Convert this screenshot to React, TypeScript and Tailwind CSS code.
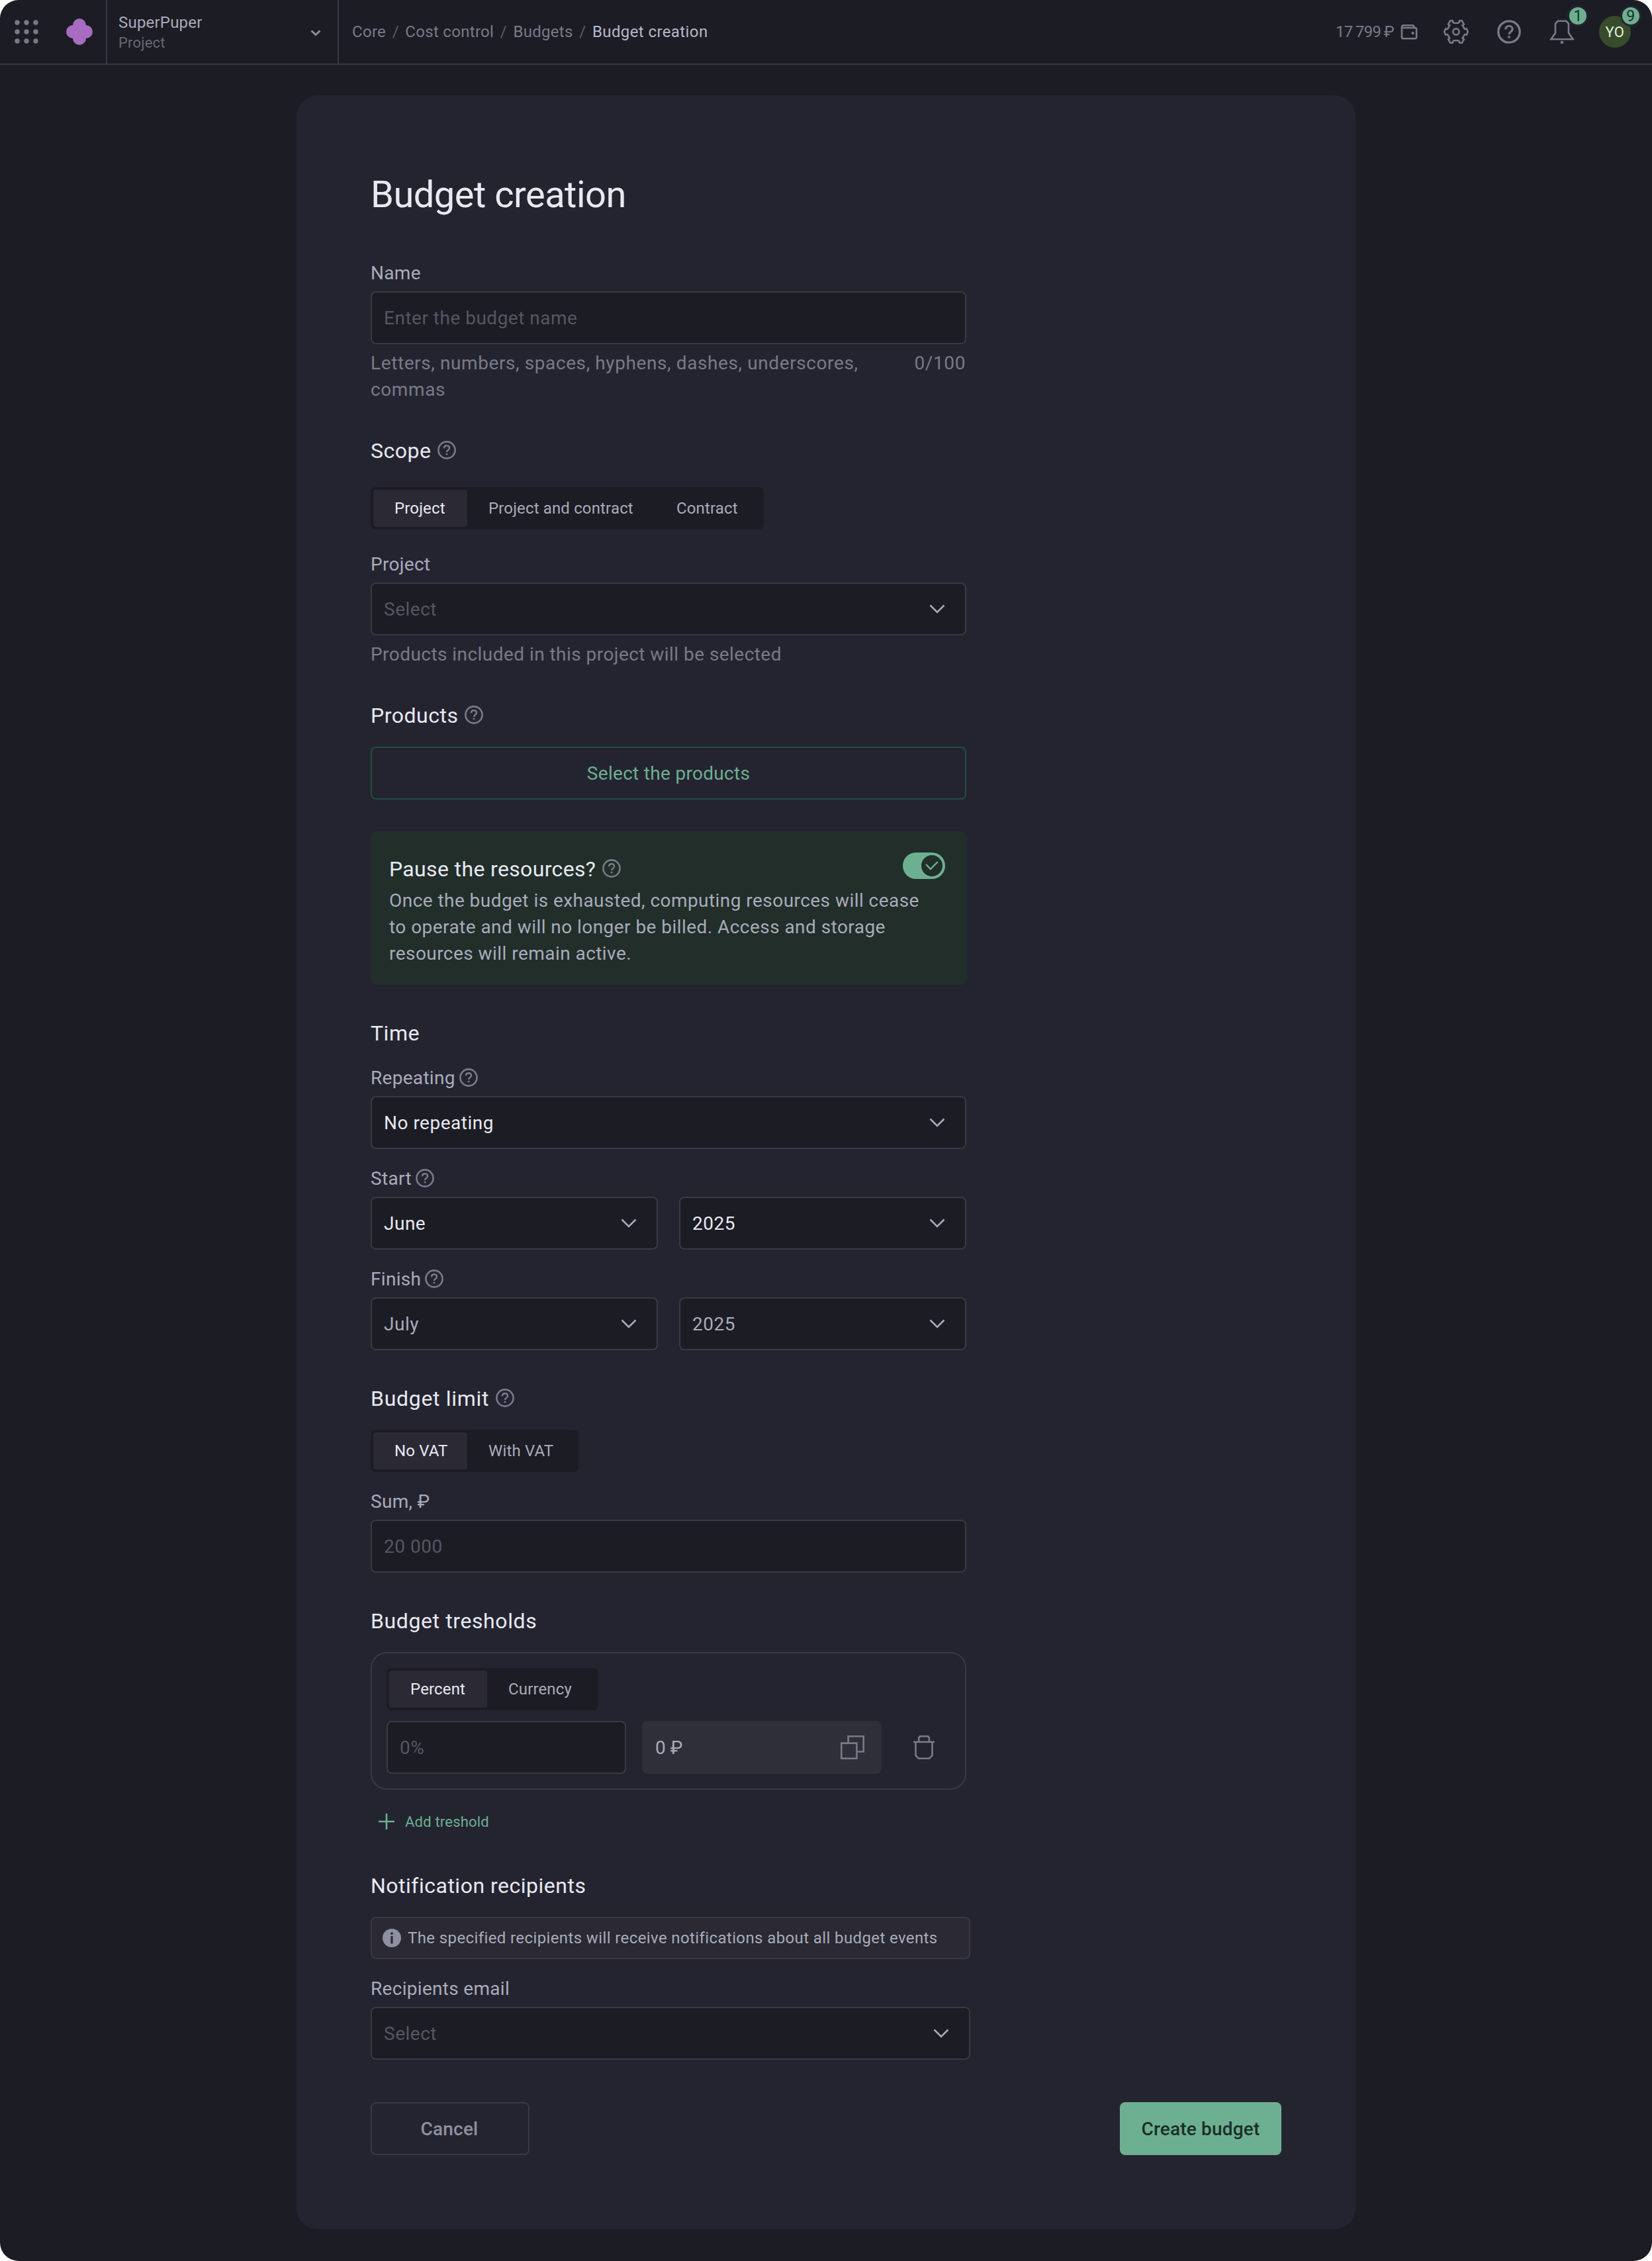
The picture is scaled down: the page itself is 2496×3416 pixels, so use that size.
import { useState } from 'react';
import type { ReactNode } from 'react';
import clsx from 'clsx';

function HelpIcon({ className = 'size-7' }: { className?: string }) {
  return (
    <svg viewBox="0 0 28 28" fill="none" stroke="#787a89" className={clsx('shrink-0', className)}>
      <circle cx="14" cy="14" r="12.6" strokeWidth="2.6" />
      <path d="M10 11.2c0-2.5 1.7-4 4-4s4 1.5 4 3.7c0 3.1-4 3.1-4 6.2" strokeWidth="2.5" />
      <rect x="12.7" y="18.8" width="2.6" height="2.6" fill="#787a89" stroke="none" />
    </svg>
  );
}

function ChevronIcon() {
  return (
    <svg viewBox="0 0 24 14" fill="none" stroke="#a9abba" strokeWidth="2.6" className="w-6 h-3.5 shrink-0">
      <path d="M1.5 1.5 12 12 22.5 1.5" />
    </svg>
  );
}

function Heading({ children, help }: { children: ReactNode; help?: boolean }) {
  return (
    <div className="flex h-12 items-center gap-2.5">
      <h2 className="mt-0.5 text-[32px] leading-[48px] tracking-[0.5px] text-[#e8e9f1]">{children}</h2>
      {help && <HelpIcon />}
    </div>
  );
}

function Label({ children, help }: { children: ReactNode; help?: boolean }) {
  return (
    <div className="flex h-10 items-center gap-1.5 mb-2">
      <span className="mt-0.5 text-[28px] leading-10 tracking-[0.3px] text-[#a9abba]">{children}</span>
      {help && <HelpIcon />}
    </div>
  );
}

type Tone = 'empty' | 'value' | 'auto';

const tones: Record<Tone, string> = {
  empty: 'text-[#555662]',
  value: 'text-[#e8e9f1]',
  auto: 'text-[#a9abba]',
};

function Field({ text, tone = 'empty', select }: { text: string; tone?: Tone; select?: boolean }) {
  return (
    <div className="flex h-20 w-full items-center justify-between rounded-lg border-2 border-[#393943] bg-[#1c1c24] pl-[18px] pr-[30px]">
      <span className={clsx('mt-0.5 text-[28px] leading-10 tracking-[0.5px]', tones[tone])}>{text}</span>
      {select && <ChevronIcon />}
    </div>
  );
}

function Segmented({ options, widths }: { options: string[]; widths: string[] }) {
  const [active, setActive] = useState(0);
  return (
    <div className="inline-flex h-16 rounded-lg bg-[#1c1c24] py-1 pl-1">
      {options.map((option, i) => (
        <button
          key={option}
          onClick={() => setActive(i)}
          className={clsx(
            'h-14 rounded pl-8 text-left text-2xl tracking-[0.15px] whitespace-nowrap',
            widths[i],
            i === active ? 'bg-[#2a2934] text-[#e8e9f1]' : 'text-[#a9abba]'
          )}
        >
          {option}
        </button>
      ))}
    </div>
  );
}

function CounterBadge({ children, className }: { children: ReactNode; className: string }) {
  return (
    <span
      className={clsx(
        'absolute flex size-8 items-center justify-center rounded-full border-[3px] border-[#242430] bg-[#6cb091] text-[23px] leading-none text-[#1d2e28]',
        className
      )}
    >
      {children}
    </span>
  );
}

function Header() {
  const crumbs = ['Core', 'Cost control', 'Budgets'];
  return (
    <header className="flex h-[98px] border-b-2 border-[#393943]">
      <div className="flex h-24 w-[162px] items-center gap-[42px] border-r-2 border-[#393943] pl-[22px]">
        <svg viewBox="0 0 36 36" fill="#787a89" className="size-9">
          {[4, 18, 32].map((cy) => [4, 18, 32].map((cx) => <circle key={`${cx}-${cy}`} cx={cx} cy={cy} r="3.7" />))}
        </svg>
        <svg viewBox="0 0 40 40" fill="#a86cc0" className="size-10">
          <rect x="10" width="20" height="40" rx="10" />
          <rect y="10" width="40" height="20" rx="10" />
        </svg>
      </div>

      <div className="flex h-24 w-[350px] items-center justify-between border-r-2 border-[#393943] pl-[17px] pr-[25px]">
        <div>
          <p className="text-2xl leading-8 tracking-[0.2px] text-[#a9abba]">SuperPuper</p>
          <p className="mt-px text-[22px] leading-7 tracking-[0.2px] text-[#666775]">Project</p>
        </div>
        <svg viewBox="0 0 16 10" fill="none" stroke="#8e90a0" strokeWidth="2.8" className="mt-1 w-4 h-2.5">
          <path d="m1.5 1.5 6.5 6 6.5-6" />
        </svg>
      </div>

      <nav className="flex flex-1 items-center gap-[9.5px] pl-5 text-2xl tracking-[0.3px] text-[#787a89]">
        {crumbs.map((crumb) => (
          <div key={crumb} className="flex gap-[9.5px]">
            <span>{crumb}</span>
            <span className="text-[#5a5b68]">/</span>
          </div>
        ))}
        <span className="tracking-[0.4px] text-[#b6b8c6]">Budget creation</span>
      </nav>

      <div className="flex items-center pr-8">
        <span className="text-2xl tracking-[-0.7px] [word-spacing:-0.8px] text-[#787a89]">17 799 ₽</span>
        <svg viewBox="0 0 26 24" fill="none" stroke="#787a89" strokeWidth="2.6" className="ml-2.5 w-[26px] h-6">
          <path d="M2 5.2C2 3.4 3 2.2 4.8 2.2H17.5c2 0 3 1.2 3.3 3.5" />
          <path d="M2 5v15c0 1.5.9 2.3 2.3 2.3h17.6c1.4 0 2.3-.8 2.3-2.3V8.3c0-1.5-.9-2.3-2.3-2.3H3.5" />
          <circle cx="18.6" cy="14" r="1.7" fill="#787a89" strokeWidth="1" />
        </svg>
        <svg viewBox="0 0 40 40" fill="none" stroke="#787a89" strokeWidth="2.6" className="ml-[38px] size-10">
          <circle cx="20" cy="20" r="4.6" />
          <path d="M15.5 6.8h9M15.5 33.2h9M10.8 9.3 6.6 16.7M29.2 9.3l4.2 7.4M10.8 30.7l-4.2-7.4M29.2 30.7l4.2-7.4" />
          <path d="M15.7 6.5l-1-3.200h-3.500L8.200 8.600l2.700 2M24.300 6.500l1-3.200h3.500l3 5.300-2.700 2M15.700 33.500l-1 3.200h-3.500l-3-5.300 2.700-2M24.300 33.500l1 3.200h3.500l3-5.300-2.700-2M6.900 16.300 4.200 15.300 2.300 20l1.900 4.700 2.700-1M33.100 16.300l2.700-1L37.700 20l-1.900 4.700-2.700-1" />
        </svg>
        <HelpIcon className="ml-[42px] size-9" />
        <div className="relative ml-10 h-9 w-11">
          <svg viewBox="0 0 44 36" fill="none" stroke="#787a89" strokeWidth="2.6" className="w-11 h-9">
            <path d="M15.600 1.800h12.800l3.600 4v14l6.500 9.400h-33L12 19.800v-14Z" />
            <path d="M20 34h4" strokeWidth="4" />
          </svg>
          <CounterBadge className="-top-[22px] -right-[18px]">1</CounterBadge>
        </div>
        <div className="relative ml-[34px] flex size-12 items-center justify-center rounded-full bg-[#384c2b] text-[22px] tracking-[0.5px] text-[#e0f2dc]">
          YO
          <CounterBadge className="-top-4 -right-4">9</CounterBadge>
        </div>
      </div>
    </header>
  );
}

export default function App() {
  return (
    <div className="bg-white">
      <div className="h-[3416px] w-[2496px] overflow-hidden rounded-[28px] bg-[#1c1c24] font-['Roboto','Liberation_Sans',sans-serif]">
        <Header />

        <main className="mx-auto mt-[46px] h-[3224px] w-[1600px] rounded-[32px] bg-[#242430] px-28 pt-28">
          <h1 className="h-[74px] text-[56px] leading-[76px] tracking-[-0.5px] text-[#e8e9f1]">Budget creation</h1>

          <div className="w-[900px]">
            <section className="mt-[62px]">
              <Label>Name</Label>
              <Field text="Enter the budget name" />
              <div className="mt-[9px] -mb-px flex justify-between text-[28px] leading-10 tracking-[0.6px] text-[#787a89]">
                <p className="w-[780px]">Letters, numbers, spaces, hyphens, dashes, underscores, commas</p>
                <span className="mr-px">0/100</span>
              </div>
            </section>

            <section className="mt-12">
              <Heading help>Scope</Heading>
              <div className="mt-8 flex">
                <Segmented
                  options={['Project', 'Project and contract', 'Contract']}
                  widths={['w-[142px]', 'w-[284px]', 'w-[164px]']}
                />
              </div>
              <div className="mt-8">
                <Label>Project</Label>
                <Field text="Select" select />
                <p className="mt-[9px] -mb-px text-[28px] leading-10 tracking-[0.45px] text-[#787a89]">
                  Products included in this project will be selected
                </p>
              </div>
            </section>

            <section className="mt-12">
              <Heading help>Products</Heading>
              <button className="mt-6 h-20 w-full rounded-lg border-2 border-[#1d4f3c] pt-0.5 text-[28px] tracking-[0.3px] text-[#6cb091]">
                Select the products
              </button>
            </section>

            <section className="mt-12 flex h-[232px] justify-between rounded-lg bg-[#212e2a] pt-8 pr-8 pl-7">
              <div className="w-[812px] shrink-0">
                <Heading help>
                  <span className="tracking-[0.35px]">Pause the resources?</span>
                </Heading>
                <p className="mt-[5px] text-[28px] leading-10 tracking-[0.45px] text-[#a9abba]">
                  Once the budget is exhausted, computing resources will cease
                  <br />
                  to operate and will no longer be billed. Access and storage
                  <br />
                  resources will remain active.
                </p>
              </div>
              <div className="-ml-9 flex h-10 w-16 shrink-0 items-center justify-end rounded-full bg-[#6cb091] p-1">
                <div className="flex size-8 items-center justify-center rounded-full bg-[#212e2a]">
                  <svg viewBox="0 0 20 14" fill="none" stroke="#6cb091" strokeWidth="2.4" className="w-5 h-3.5">
                    <path d="m1.200 5 6.600 7L18.800 1.200" />
                  </svg>
                </div>
              </div>
            </section>

            <section className="mt-12">
              <Heading>Time</Heading>
              <div className="mt-6 flex flex-col gap-6">
                <div>
                  <Label help>Repeating</Label>
                  <Field text="No repeating" tone="value" select />
                </div>
                <div>
                  <Label help>Start</Label>
                  <div className="flex gap-8">
                    <Field text="June" tone="value" select />
                    <Field text="2025" tone="value" select />
                  </div>
                </div>
                <div>
                  <Label help>Finish</Label>
                  <div className="flex gap-8">
                    <Field text="July" tone="auto" select />
                    <Field text="2025" tone="auto" select />
                  </div>
                </div>
              </div>
            </section>

            <section className="mt-12">
              <Heading help>
                <span className="tracking-[0.7px]">Budget limit</span>
              </Heading>
              <div className="mt-6 flex">
                <Segmented options={['No VAT', 'With VAT']} widths={['w-[142px]', 'w-[168px]']} />
              </div>
              <div className="mt-6">
                <Label>Sum, ₽</Label>
                <Field text="20 000" />
              </div>
            </section>

            <section className="mt-12">
              <Heading>
                <span className="tracking-[0.6px]">Budget tresholds</span>
              </Heading>
              <div className="mt-6 h-[208px] rounded-3xl border-2 border-[#393943] p-[22px]">
                <div className="flex">
                  <Segmented options={['Percent', 'Currency']} widths={['w-[148px]', 'w-[168px]']} />
                </div>
                <div className="mt-4 flex items-center">
                  <div className="w-[362px]">
                    <Field text="0%" />
                  </div>
                  <div className="ml-6 flex h-20 w-[362px] items-center justify-between rounded-lg bg-[#2f2f3a] pl-5 pr-[26px]">
                    <span className="mt-0.5 text-[28px] text-[#a9abba]">0 ₽</span>
                    <svg viewBox="0 0 36 36" fill="none" stroke="#787a89" strokeWidth="2.6" className="size-9">
                      <path d="M1.300 11.600h23.200v23.100H1.300Z" />
                      <path d="M11.600 11.600V1.300h23.100v23.200H24.500" />
                    </svg>
                  </div>
                  <svg viewBox="0 0 32 36" fill="none" stroke="#787a89" strokeWidth="2.6" className="ml-12 w-8 h-9">
                    <path d="M0 9.800h32" />
                    <path d="M8.200 9.800V3.300l1.900-2h11.800l2 2v6.500" />
                    <path d="M3.500 9.800v20.400l4.400 4.500h16.200l4.400-4.500V9.800" />
                  </svg>
                </div>
              </div>
              <button className="mt-6 flex h-12 items-center gap-4 pl-3 text-[22px] tracking-[0.2px] text-[#6cb091]">
                <svg viewBox="0 0 24 24" stroke="#6cb091" strokeWidth="2.6" className="size-6">
                  <path d="M12 0v24M0 12h24" />
                </svg>
                Add treshold
              </button>
            </section>
          </div>

          <section className="mt-12 w-[906px]">
            <Heading>Notification recipients</Heading>
            <div className="mt-6 flex h-16 items-center gap-2.5 rounded-lg border-2 border-[#393943] bg-[#2a2934] pl-4">
              <svg viewBox="0 0 28 28" className="size-7">
                <circle cx="14" cy="14" r="14" fill="#8e90a0" />
                <path d="M12.400 5.500h3.200v3.400h-3.200zM12.400 11h3.200v11.500h-3.200z" fill="#2a2934" />
              </svg>
              <span className="text-2xl tracking-[0.39px] text-[#a9abba]">
                The specified recipients will receive notifications about all budget events
              </span>
            </div>
            <div className="mt-6">
              <Label>Recipients email</Label>
              <Field text="Select" select />
            </div>
          </section>

          <div className="mt-16 flex justify-between text-[28px] font-medium tracking-[0.2px]">
            <button className="h-20 w-60 rounded-lg border-2 border-[#393943] pt-0.5 pr-0.5 text-[#8e90a0]">Cancel</button>
            <button className="h-20 w-[244px] rounded-lg bg-[#6cb091] pt-0.5 text-[#1d2e28]">Create budget</button>
          </div>
        </main>
      </div>
    </div>
  );
}
